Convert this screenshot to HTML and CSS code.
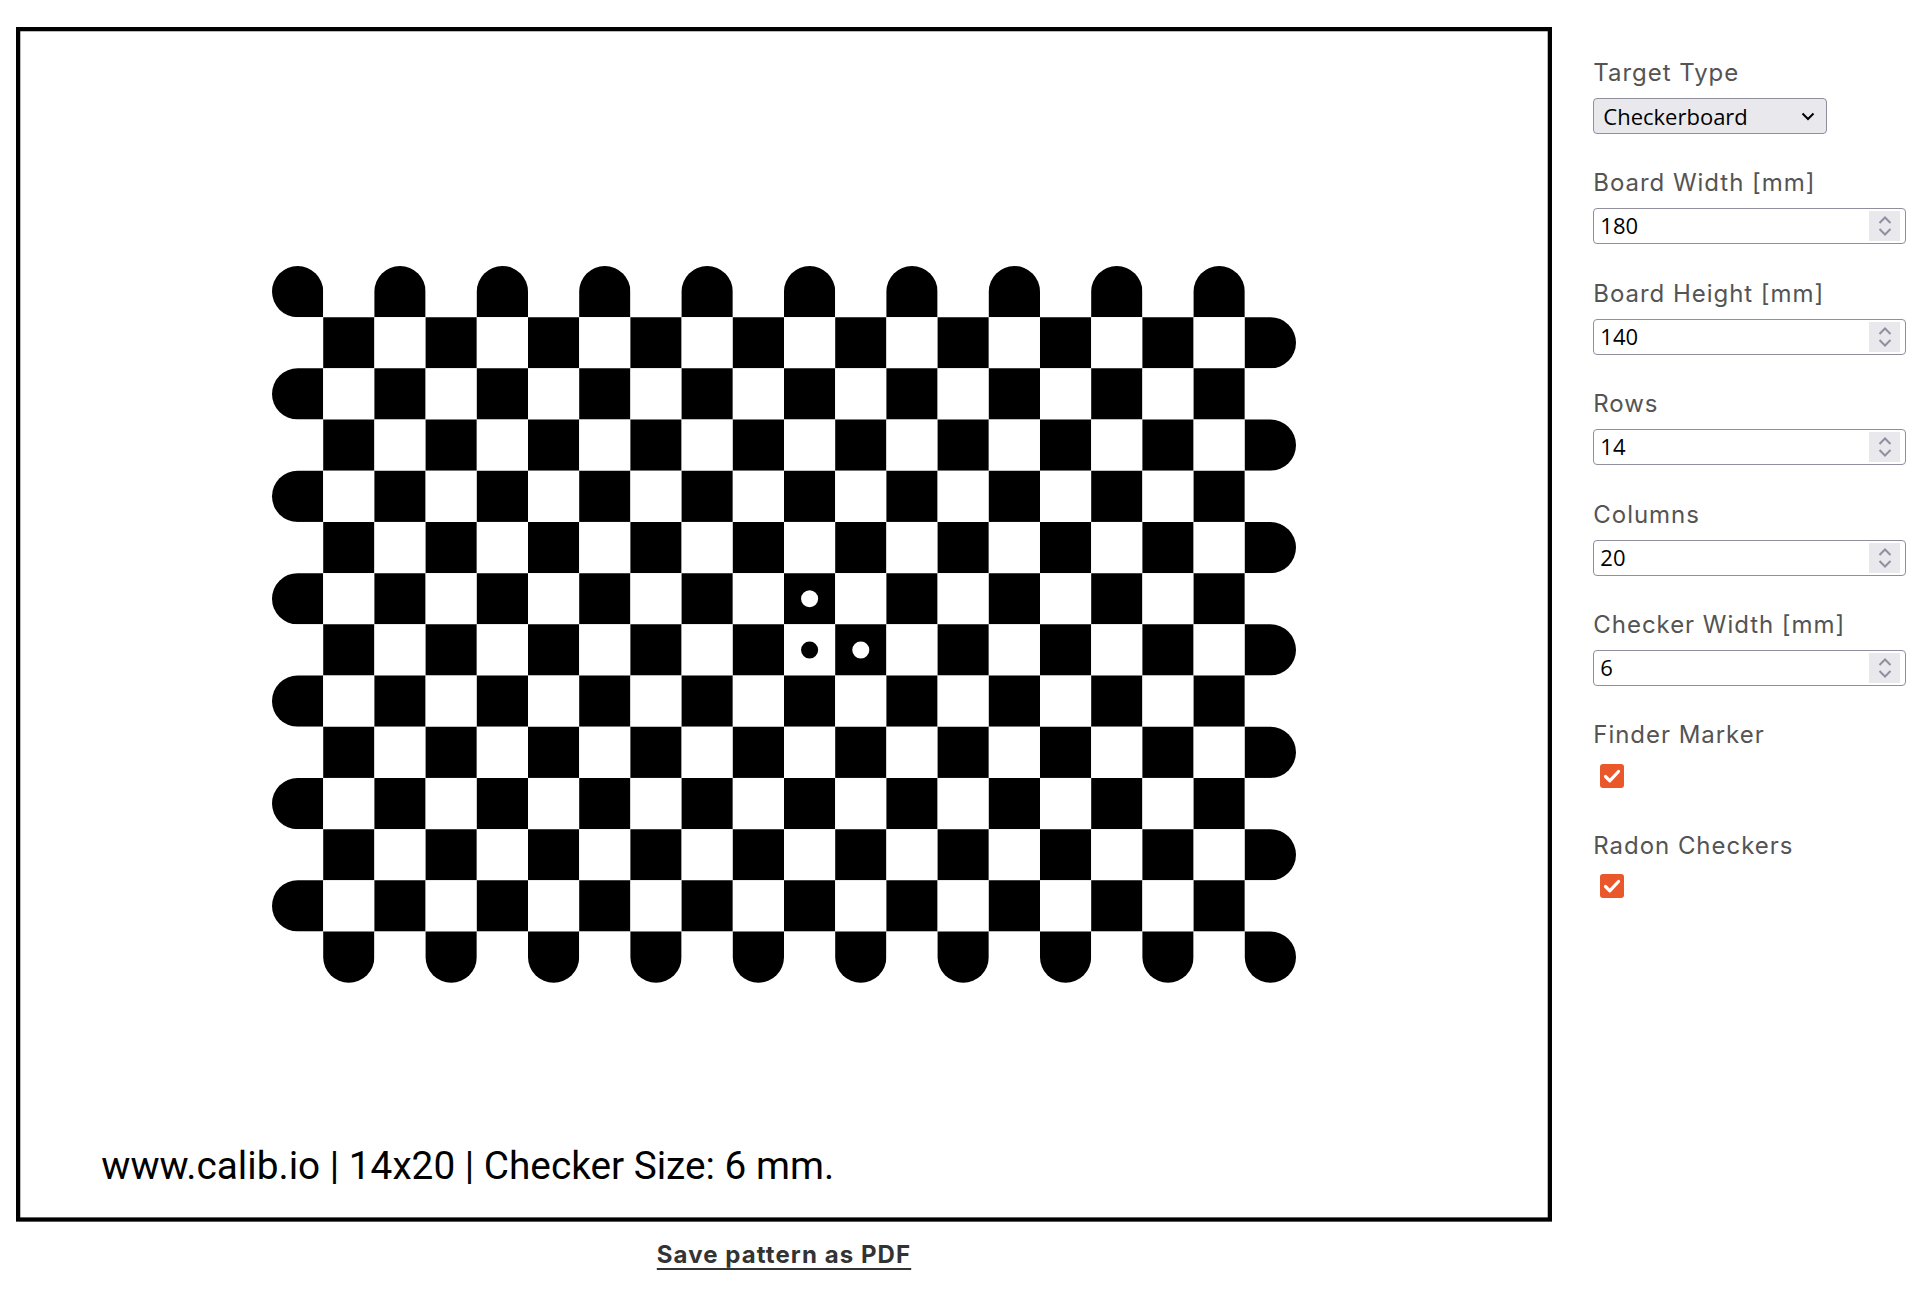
FILE: index.html
```html
<!DOCTYPE html>
<html lang="en">
<head>
<meta charset="utf-8">
<title>Calibration Pattern</title>
<link rel="stylesheet" href="styles.css">
</head>
<body>
<div class="page">
  <main class="preview">
    <svg id="board" class="board" viewBox="0 0 180 140" xmlns="http://www.w3.org/2000/svg">
      <rect class="frame" x="0.25" y="0.25" width="179.5" height="139.5"/>
      <g id="cells"></g>
      <circle class="dot-w" cx="93" cy="67" r="1"/>
      <circle class="dot-b" cx="93" cy="73" r="1"/>
      <circle class="dot-w" cx="99" cy="73" r="1"/>
      <text class="caption" x="10" y="135">www.calib.io | 14x20 | Checker Size: 6 mm.</text>
    </svg>
    <a class="save" href="#">Save pattern as PDF</a>
  </main>

  <aside class="controls">
    <div class="field">
      <label class="lbl">Target Type</label>
      <div class="select">
        <span>Checkerboard</span>
        <svg class="chev" width="14" height="9" viewBox="0 0 14 9"><path d="M1.5 1.5 L7 7 L12.5 1.5"/></svg>
      </div>
    </div>

    <div class="field">
      <label class="lbl">Board Width [mm]</label>
      <div class="num">
        <input class="num-in" type="text" value="180">
        <span class="spin"><svg width="14" height="22" viewBox="0 0 14 22"><path d="M1.5 8 L7 2.5 L12.5 8 M1.5 14 L7 19.5 L12.5 14"/></svg></span>
      </div>
    </div>

    <div class="field">
      <label class="lbl">Board Height [mm]</label>
      <div class="num">
        <input class="num-in" type="text" value="140">
        <span class="spin"><svg width="14" height="22" viewBox="0 0 14 22"><path d="M1.5 8 L7 2.5 L12.5 8 M1.5 14 L7 19.5 L12.5 14"/></svg></span>
      </div>
    </div>

    <div class="field">
      <label class="lbl">Rows</label>
      <div class="num">
        <input class="num-in" type="text" value="14">
        <span class="spin"><svg width="14" height="22" viewBox="0 0 14 22"><path d="M1.5 8 L7 2.5 L12.5 8 M1.5 14 L7 19.5 L12.5 14"/></svg></span>
      </div>
    </div>

    <div class="field">
      <label class="lbl">Columns</label>
      <div class="num">
        <input class="num-in" type="text" value="20">
        <span class="spin"><svg width="14" height="22" viewBox="0 0 14 22"><path d="M1.5 8 L7 2.5 L12.5 8 M1.5 14 L7 19.5 L12.5 14"/></svg></span>
      </div>
    </div>

    <div class="field">
      <label class="lbl">Checker Width [mm]</label>
      <div class="num">
        <input class="num-in" type="text" value="6">
        <span class="spin"><svg width="14" height="22" viewBox="0 0 14 22"><path d="M1.5 8 L7 2.5 L12.5 8 M1.5 14 L7 19.5 L12.5 14"/></svg></span>
      </div>
    </div>

    <div class="field">
      <label class="lbl">Finder Marker</label>
      <div class="check-row">
        <span class="check" role="checkbox" aria-checked="true"><svg width="24" height="24" viewBox="0 0 24 24"><path d="M5.5 12.5 L9.8 16.8 L18.5 7.5"/></svg></span>
      </div>
    </div>

    <div class="field">
      <label class="lbl">Radon Checkers</label>
      <div class="check-row">
        <span class="check" role="checkbox" aria-checked="true"><svg width="24" height="24" viewBox="0 0 24 24"><path d="M5.5 12.5 L9.8 16.8 L18.5 7.5"/></svg></span>
      </div>
    </div>
  </aside>
</div>
<script src="script.js"></script>
</body>
</html>
```

FILE: styles.css
```css
html, body {
  margin: 0;
  background: #fff;
}

.page {
  display: flex;
  align-items: flex-start;
  padding: 27px 0 0 16px;
}

.preview {
  display: flex;
  flex-direction: column;
  align-items: center;
  width: 1536px;
}

.board {
  display: block;
  width: 1536px;
  height: 1194.67px;
}

.frame {
  fill: #fff;
  stroke: #000;
  stroke-width: 0.5;
}

.cell-b { fill: #000; }
.cell-w { fill: #fff; }
.dot-w { fill: #fff; }
.dot-b { fill: #000; }

.caption {
  font-family: Roboto, "Liberation Sans", sans-serif;
  font-size: 4.54px;
  fill: #000;
}

.save {
  margin-top: 18.6px;
  font-family: Inter, "Liberation Sans", sans-serif;
  font-weight: 700;
  font-size: 24px;
  line-height: 30px;
  letter-spacing: 0.045em;
  color: #333;
  text-decoration: underline;
  text-decoration-thickness: 2px;
  text-underline-offset: 5px;
}

.controls {
  margin-left: 41.3px;
  padding-top: 31px;
  width: 313px;
  display: flex;
  flex-direction: column;
  gap: 34.4px;
}

.field {
  display: flex;
  flex-direction: column;
  gap: 10px;
}

.lbl {
  font-family: Inter, "Liberation Sans", sans-serif;
  font-size: 24px;
  line-height: 30px;
  letter-spacing: 0.04em;
  color: #545454;
}

.select {
  box-sizing: border-box;
  width: 234px;
  height: 36px;
  display: flex;
  align-items: center;
  justify-content: space-between;
  padding: 0 11px 0 9px;
  border: 1px solid #8f8f9d;
  border-radius: 4px;
  background: #e9e9ed;
  font-family: "Open Sans", "Noto Sans", sans-serif;
  font-size: 22px;
  color: #000;
}

.chev path {
  fill: none;
  stroke: #000;
  stroke-width: 2;
}

.num {
  box-sizing: border-box;
  width: 312.4px;
  height: 36px;
  display: flex;
  padding: 2px 4.7px 2px 2px;
  border: 1px solid #8f8f9d;
  border-radius: 4px;
  background: #fff;
}

.num-in {
  flex: 1;
  min-width: 0;
  border: 0;
  outline: none;
  padding: 0 0 2px 4px;
  margin: 0;
  background: transparent;
  font-family: "Open Sans", "Noto Sans", sans-serif;
  font-size: 22px;
  color: #000;
}

.spin {
  width: 31px;
  display: flex;
  align-items: center;
  justify-content: center;
  background: #e9e9ed;
}

.spin svg {
  display: block;
}

.spin path {
  fill: none;
  stroke: #8f8f9d;
  stroke-width: 2;
}

.check-row {
  height: 36px;
}

.check {
  display: block;
  width: 24px;
  height: 24px;
  margin: 3.6px 0 0 6.7px;
  border-radius: 3px;
  background: #e9572a;
}

.check svg {
  display: block;
}

.check path {
  fill: none;
  stroke: #fff;
  stroke-width: 3.2;
  stroke-linecap: round;
  stroke-linejoin: round;
}
```

FILE: script.js
```js
(function () {
  var NS = 'http://www.w3.org/2000/svg';
  var g = document.getElementById('cells');
  var rows = 14, cols = 20, s = 6;
  var x0 = (180 - cols * s) / 2;
  var y0 = (140 - rows * s) / 2;
  var h = s / 2;

  function shape(x, y, tl, tr, br, bl) {
    var d = 'M' + (x + (tl ? h : 0)) + ' ' + y;
    d += ' H' + (x + s - (tr ? h : 0));
    if (tr) d += ' A' + h + ' ' + h + ' 0 0 1 ' + (x + s) + ' ' + (y + h);
    d += ' V' + (y + s - (br ? h : 0));
    if (br) d += ' A' + h + ' ' + h + ' 0 0 1 ' + (x + s - h) + ' ' + (y + s);
    d += ' H' + (x + (bl ? h : 0));
    if (bl) d += ' A' + h + ' ' + h + ' 0 0 1 ' + x + ' ' + (y + s - h);
    d += ' V' + (y + (tl ? h : 0));
    if (tl) d += ' A' + h + ' ' + h + ' 0 0 1 ' + (x + h) + ' ' + y;
    d += ' Z';
    var p = document.createElementNS(NS, 'path');
    p.setAttribute('d', d);
    p.setAttribute('class', 'cell-b');
    return p;
  }

  for (var r = 0; r < rows; r++) {
    for (var c = 0; c < cols; c++) {
      var x = x0 + c * s, y = y0 + r * s;
      if ((r + c) % 2 === 0) {
        var top = r === 0, bottom = r === rows - 1;
        var left = c === 0, right = c === cols - 1;
        g.appendChild(shape(x, y, top || left, top || right, bottom || right, bottom || left));
      } else {
        var rect = document.createElementNS(NS, 'rect');
        rect.setAttribute('x', x);
        rect.setAttribute('y', y);
        rect.setAttribute('width', s);
        rect.setAttribute('height', s);
        rect.setAttribute('class', 'cell-w');
        g.appendChild(rect);
      }
    }
  }
})();
```
